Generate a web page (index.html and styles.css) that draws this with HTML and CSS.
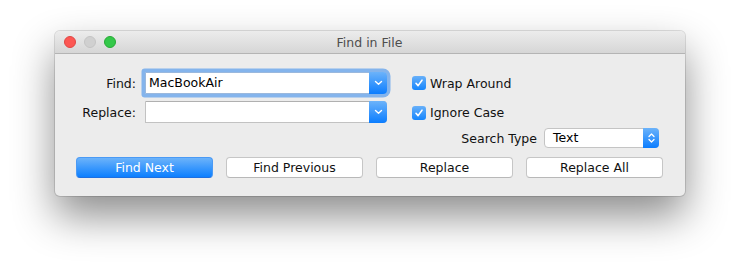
FILE: index.html
```html
<!DOCTYPE html>
<html>
<head>
<meta charset="utf-8">
<link rel="stylesheet" href="styles.css">
</head>
<body>
<div class="window">
  <div class="titlebar">
    <div class="lights">
      <span class="light red"></span>
      <span class="light gray"></span>
      <span class="light green"></span>
    </div>
    <div class="title">Find in File</div>
  </div>
  <div class="content">
    <div class="row row1">
      <label class="label">Find:</label>
      <div class="combo focused">
        <span class="combo-text">MacBookAir</span>
        <span class="combo-btn"><svg width="9" height="6" viewBox="0 0 9 6"><path d="M1.5 1.5 L4.5 4.2 L7.5 1.5" fill="none" stroke="#fff" stroke-width="1.4" stroke-linecap="round" stroke-linejoin="round"/></svg></span>
      </div>
      <div class="check">
        <span class="box"><svg width="10" height="10" viewBox="0 0 10 10"><path d="M2 5.3 L4.1 7.6 L8 2.2" fill="none" stroke="#fff" stroke-width="1.6" stroke-linecap="round" stroke-linejoin="round"/></svg></span>
        <span>Wrap Around</span>
      </div>
    </div>
    <div class="row row2">
      <label class="label">Replace:</label>
      <div class="combo">
        <span class="combo-text"></span>
        <span class="combo-btn"><svg width="9" height="6" viewBox="0 0 9 6"><path d="M1.5 1.5 L4.5 4.2 L7.5 1.5" fill="none" stroke="#fff" stroke-width="1.4" stroke-linecap="round" stroke-linejoin="round"/></svg></span>
      </div>
      <div class="check">
        <span class="box"><svg width="10" height="10" viewBox="0 0 10 10"><path d="M2 5.3 L4.1 7.6 L8 2.2" fill="none" stroke="#fff" stroke-width="1.6" stroke-linecap="round" stroke-linejoin="round"/></svg></span>
        <span>Ignore Case</span>
      </div>
    </div>
    <div class="row row3">
      <span class="stlabel">Search Type</span>
      <div class="select">
        <span class="select-text">Text</span>
        <span class="select-btn"><svg width="9" height="14" viewBox="0 0 9 14"><path d="M2 5.5 L4.5 3 L7 5.5 M2 8.5 L4.5 11 L7 8.5" fill="none" stroke="#fff" stroke-width="1.3" stroke-linecap="round" stroke-linejoin="round"/></svg></span>
      </div>
    </div>
    <div class="buttons">
      <button class="btn primary">Find Next</button>
      <button class="btn">Find Previous</button>
      <button class="btn">Replace</button>
      <button class="btn">Replace All</button>
    </div>
  </div>
</div>
</body>
</html>
```
FILE: styles.css
```css
html, body {
  margin: 0;
  padding: 0;
  background: #ffffff;
}
html { height: 100%; }
body {
  font-family: "DejaVu Sans", "Lucida Grande", sans-serif;
  font-size: 12.5px;
  color: #111;
  padding: 31px 0 0 55px;
  min-height: 100vh;
  box-sizing: border-box;
}
.window {
  width: 630px;
  height: 165px;
  background: #ececec;
  border-radius: 5px;
  box-shadow: 0 0 0 1px rgba(0,0,0,0.12), 0 20px 42px rgba(0,0,0,0.45);
  overflow: hidden;
  display: flex;
  flex-direction: column;
}
.titlebar {
  height: 22px;
  background: linear-gradient(#ececec, #d6d6d6);
  border-bottom: 1px solid #b4b4b4;
  display: flex;
  align-items: center;
  position: relative;
}
.lights {
  display: flex;
  gap: 8px;
  padding-left: 9px;
}
.light {
  width: 12px;
  height: 12px;
  border-radius: 50%;
  box-sizing: border-box;
}
.light.red { background: #fc5753; border: 1px solid #df4744; }
.light.gray { background: #d0d0d0; border: 1px solid #c4c4c4; }
.light.green { background: #34c84a; border: 1px solid #27aa35; }
.title {
  flex: 1;
  text-align: center;
  margin-left: -62px;
  color: #4d4d4d;
  font-size: 12.5px;
}
.content {
  display: flex;
  flex-direction: column;
  flex: 1;
}
.row {
  display: flex;
  align-items: center;
}
.row1 { margin-top: 18px; height: 22px; }
.row2 { margin-top: 7px; height: 22px; }
.label {
  width: 81px;
  text-align: right;
  margin-right: 9px;
}
.combo {
  width: 242px;
  height: 22px;
  box-sizing: border-box;
  background: #fff;
  border: 1px solid #c2c2c2;
  border-top-color: #b0b0b0;
  display: flex;
  align-items: stretch;
  border-radius: 0 4px 4px 0;
}
.combo.focused {
  box-shadow: 0 0 0 3.5px #84b4ec;
  border-color: #9ab8dd;
  border-radius: 1px 4px 4px 1px;
}
.combo-text {
  flex: 1;
  padding-left: 3px;
  line-height: 20px;
  color: #000;
}
.combo-btn {
  width: 18px;
  margin: -1px -1px -1px 0;
  background: linear-gradient(#6cb3fa, #0b7dff);
  border-radius: 0 4px 4px 0;
  display: flex;
  align-items: center;
  justify-content: center;
}
.check {
  margin-left: 25px;
  display: flex;
  align-items: center;
  gap: 4px;
}
.row2 .check { margin-top: 1px; }
.box {
  width: 14px;
  height: 14px;
  border-radius: 3px;
  background: linear-gradient(#68b0f9, #1485fd);
  display: flex;
  align-items: center;
  justify-content: center;
}
.row3 {
  margin-top: 5px;
  height: 20px;
  justify-content: flex-end;
  padding-right: 26px;
}
.stlabel {
  margin-right: 7px;
}
.select {
  width: 115px;
  height: 20px;
  box-sizing: border-box;
  background: #fff;
  border: 1px solid #c4c4c4;
  border-radius: 4px;
  display: flex;
  align-items: stretch;
}
.select-text {
  flex: 1;
  padding-left: 8px;
  line-height: 18px;
  color: #000;
}
.select-btn {
  width: 16px;
  margin: -1px -1px -1px 0;
  background: linear-gradient(#6cb3fa, #0b7dff);
  border-radius: 0 4px 4px 0;
  display: flex;
  align-items: center;
  justify-content: center;
}
.buttons {
  margin-top: 9px;
  display: flex;
  justify-content: space-between;
  padding: 0 22px 0 21px;
}
.btn {
  width: 137px;
  height: 21px;
  box-sizing: border-box;
  font-family: inherit;
  font-size: 12.5px;
  color: #111;
  background: #fff;
  border: 1px solid #c6c6c6;
  border-bottom-color: #b8b8b8;
  border-radius: 4px;
  padding: 0;
  line-height: 19px;
}
.btn.primary {
  color: #fff;
  background: linear-gradient(#6cb3fa, #0c7fff);
  border-color: #4a9af5;
  border-bottom-color: #1e6fe0;
}
```
